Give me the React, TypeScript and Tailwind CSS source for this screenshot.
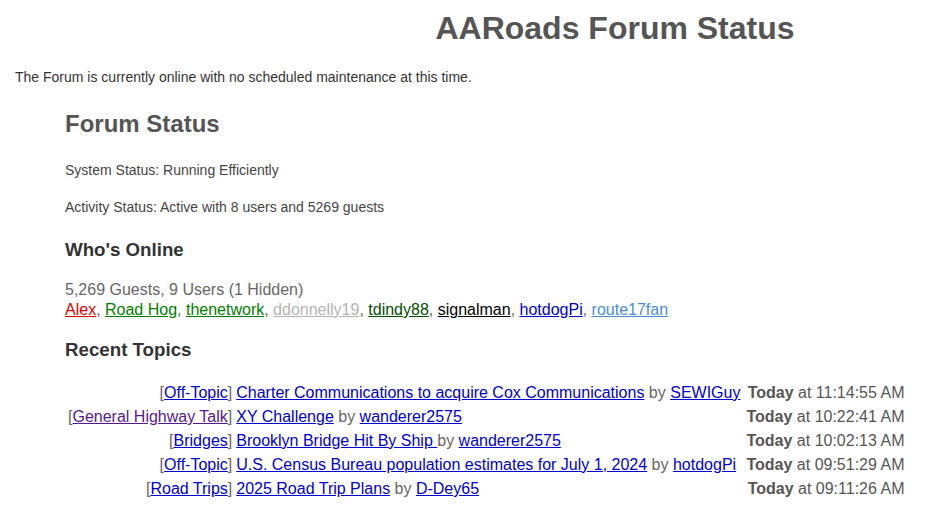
const users = [
  { name: "Alex", color: "text-[#e00000]" },
  { name: "Road Hog", color: "text-[#008000]" },
  { name: "thenetwork", color: "text-[#008000]" },
  { name: "ddonnelly19", color: "text-[#b4b4b4]" },
  { name: "tdindy88", color: "text-[#005000]" },
  { name: "signalman", color: "text-[#000000]" },
  { name: "hotdogPi", color: "text-[#0000cc]" },
  { name: "route17fan", color: "text-[#4a8bd6]" },
];

const topics = [
  { board: "Off-Topic", title: "Charter Communications to acquire Cox Communications", by: "SEWIGuy", time: "11:14:55 AM" },
  { board: "General Highway Talk", title: "XY Challenge", by: "wanderer2575", time: "10:22:41 AM", visited: true },
  { board: "Bridges", title: "Brooklyn Bridge Hit By Ship ", by: "wanderer2575", time: "10:02:13 AM" },
  { board: "Off-Topic", title: "U.S. Census Bureau population estimates for July 1, 2024", by: "hotdogPi", time: "09:51:29 AM" },
  { board: "Road Trips", title: "2025 Road Trip Plans", by: "D-Dey65", time: "09:11:26 AM" },
];

export default function App() {
  return (
    <div className="min-h-[515px] bg-white font-['Liberation_Sans',Arial,sans-serif] text-[#333]">
      <h1 className="pl-[290px] pt-[10px] text-center text-[32px] font-bold leading-[37px] text-[#555]">
        AARoads Forum Status
      </h1>
      <p className="mt-[22px] pl-[15px] text-[14px] leading-[16px] text-[#333]">
        The Forum is currently online with no scheduled maintenance at this time.
      </p>

      <div className="pl-[65px]">
        <h2 className="mt-[25px] text-[24px] font-bold leading-[28px] text-[#555]">Forum Status</h2>
        <p className="mt-[24px] text-[14px] leading-[16px] text-[#444]">System Status: Running Efficiently</p>
        <p className="mt-[21px] text-[14px] leading-[16px] text-[#444]">
          Activity Status: Active with 8 users and 5269 guests
        </p>

        <h3 className="mt-[24px] text-[18.72px] font-bold leading-[22px] text-[#333]">Who's Online</h3>
        <div className="mt-[18px] text-[16px] leading-[21px] text-[#666]">
          <div>5,269 Guests, 9 Users (1 Hidden)</div>
          <div className="-mt-px">
            {users.map((u, i) => (
              <span key={u.name}>
                <a href="#" className={`underline ${u.color}`}>{u.name}</a>
                {i < users.length - 1 ? ", " : ""}
              </span>
            ))}
          </div>
        </div>

        <h3 className="mt-[19px] text-[18.72px] font-bold leading-[22px] text-[#333]">Recent Topics</h3>
        <div className="mt-[20px] grid w-[840px] grid-cols-[auto_1fr_auto] whitespace-nowrap text-[16px] leading-[24px] text-[#666]">
          {topics.map((t, i) => (
            <div key={i} className="contents">
              <div className="pl-[3px] pr-[4px] text-right">
                [<a href="#" className={`underline ${t.visited ? "text-[#551a8b]" : "text-[#0000cc]"}`}>{t.board}</a>]
              </div>
              <div>
                <a href="#" className="underline text-[#0000cc]">{t.title}</a> by{" "}
                <a href="#" className="underline text-[#0000cc]">{t.by}</a>
              </div>
              <div className="pl-[6px] pr-[6px] text-right text-[#555]">
                <b>Today</b> at {t.time}
              </div>
            </div>
          ))}
        </div>
      </div>
    </div>
  );
}
